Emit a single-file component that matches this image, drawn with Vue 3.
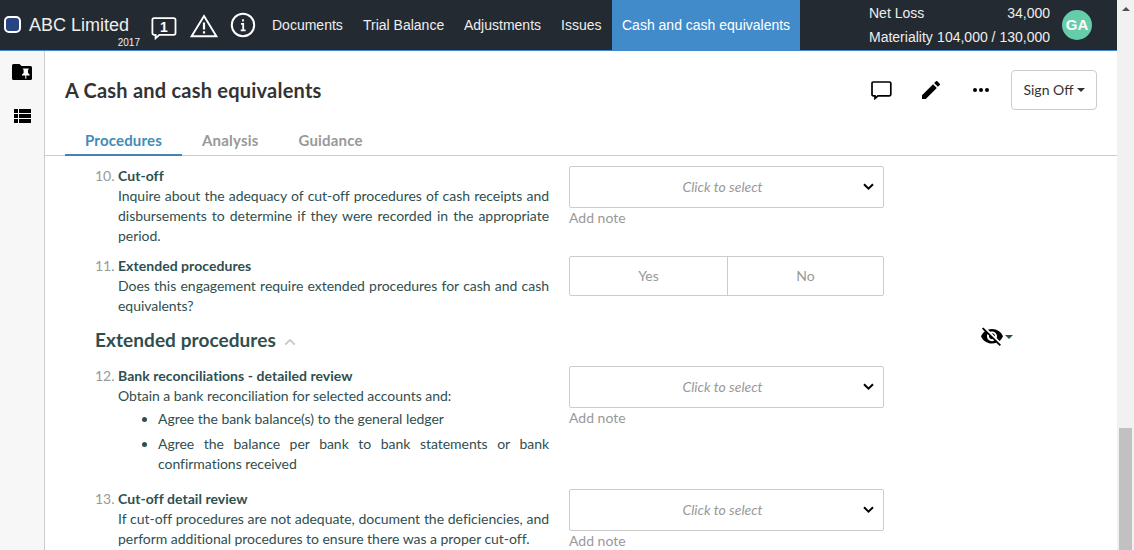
<script setup>
const nav = [
  { label: 'Documents', w: 71 },
  { label: 'Trial Balance', w: 81 },
  { label: 'Adjustments', w: 77 },
  { label: 'Issues', w: 41 },
]
const tabs = ['Procedures', 'Analysis', 'Guidance']
const before = [
  { n: '10.', title: 'Cut-off', text: 'Inquire about the adequacy of cut-off procedures of cash receipts and disbursements to determine if they were recorded in the appropriate period.', kind: 'select' },
  { n: '11.', title: 'Extended procedures', text: 'Does this engagement require extended procedures for cash and cash equivalents?', kind: 'choice' },
]
const after = [
  {
    n: '12.', title: 'Bank reconciliations - detailed review', text: 'Obtain a bank reconciliation for selected accounts and:', kind: 'select',
    bullets: ['Agree the bank balance(s) to the general ledger', 'Agree the balance per bank to bank statements or bank confirmations received'],
  },
  { n: '13.', title: 'Cut-off detail review', text: 'If cut-off procedures are not adequate, document the deficiencies, and perform additional procedures to ensure there was a proper cut-off.', kind: 'select' },
]
const groups = [{ items: before }, { heading: 'Extended procedures', items: after }]
</script>

<template>
  <div class="window">
    <div class="app">
      <header class="topbar">
        <span class="logo"></span>
        <div class="brand">
          <span class="company">ABC Limited</span>
          <span class="year">2017</span>
        </div>
        <div class="top-icons">
          <svg class="i-message" width="26" height="26" viewBox="0 0 26 26">
            <path d="M3 3.2H22.7Q24.5 3.2 24.5 4.9V18Q24.5 19.8 22.7 19.8H8.4L4.6 23.2V19.8H3.3Q1.4 19.8 1.4 18V4.9Q1.4 3.2 3 3.2Z" fill="none" stroke="#fff" stroke-width="1.8" />
            <text x="13" y="16.6" text-anchor="middle" class="badge">1</text>
          </svg>
          <svg width="30" height="26" viewBox="0 0 30 26">
            <path d="M15 4L27.4 24.2H2.6Z" fill="none" stroke="#fff" stroke-width="1.9" />
            <path d="M15 10.6V17.6M15 19.2V21.4" stroke="#fff" stroke-width="2.2" />
          </svg>
          <svg width="26" height="26" viewBox="0 0 26 26">
            <circle cx="13" cy="13" r="11.2" fill="none" stroke="#fff" stroke-width="2" />
            <path d="M13 7.2V9.4M11 11.9H13.2V18.2M10.7 18.3H15.6" fill="none" stroke="#fff" stroke-width="1.8" />
          </svg>
        </div>
        <nav class="nav">
          <a v-for="item in nav" :key="item.label" class="nav-item" :style="{ width: item.w + 'px' }">{{ item.label }}</a>
          <a class="nav-item current">Cash and cash equivalents</a>
        </nav>
        <div class="totals">
          <div class="total"><span>Net Loss</span><span>34,000</span></div>
          <div class="total"><span>Materiality</span><span>104,000 / 130,000</span></div>
        </div>
        <div class="avatar">GA</div>
      </header>

      <div class="body">
        <aside class="rail">
          <svg width="20" height="16" viewBox="0 0 20 16">
            <path d="M1.5 0H7.5L9.5 2H18.5Q20 2 20 3.5V14.5Q20 16 18.5 16H1.5Q0 16 0 14.5V1.5Q0 0 1.5 0Z" />
            <path d="M10.8 4.5H16.8V5.6H16V9L17.6 10.6V11.6H14.3V14.8H13.3V11.6H10V10.6L11.6 9V5.6H10.8Z" fill="#fff" />
          </svg>
          <svg width="17" height="14" viewBox="0 0 17 14" class="list-icon">
            <path d="M0 0H4V4H0ZM5 0H17V4H5ZM0 5H4V9H0ZM5 5H17V9H5ZM0 10H4V14H0ZM5 10H17V14H5Z" />
          </svg>
        </aside>

        <main class="main">
          <div class="doc-head">
            <h1>A Cash and cash equivalents</h1>
            <svg class="i-comment" width="21" height="19" viewBox="0 0 21 19">
              <path d="M2 1H18.5Q19.8 1 19.8 2.3V13.5Q19.8 14.8 18.5 14.8H7L4 17.5V14.8H2.3Q1 14.8 1 13.5V2.3Q1 1 2.3 1Z" fill="none" stroke="#000" stroke-width="1.7" />
            </svg>
            <svg class="i-pencil" width="18" height="18" viewBox="3 3 18 18">
              <path d="M3 17.25V21h3.75L17.81 9.94l-3.75-3.75L3 17.25zM20.71 7.04a1 1 0 0 0 0-1.41l-2.34-2.34a1 1 0 0 0-1.41 0l-1.83 1.83 3.75 3.75 1.83-1.83z" />
            </svg>
            <svg class="i-more" width="16" height="4" viewBox="0 0 16 4">
              <circle cx="2" cy="2" r="2" /><circle cx="8" cy="2" r="2" /><circle cx="14" cy="2" r="2" />
            </svg>
            <button class="sign">Sign Off<i class="caret"></i></button>
          </div>

          <div class="tabs">
            <span v-for="(tab, i) in tabs" :key="tab" class="tab" :class="{ active: i === 0 }">{{ tab }}</span>
          </div>

          <div class="list">
            <template v-for="(group, g) in groups" :key="g">
              <div v-if="group.heading" class="section">
                <h2>{{ group.heading }}</h2>
                <svg class="collapse" width="12" height="8" viewBox="0 0 12 8"><path d="M1.3 6.6L6 1.9L10.7 6.6" fill="none" stroke="#c4c4c4" stroke-width="1.7" /></svg>
                <svg class="i-hidden" width="22" height="19" viewBox="1 2.5 22 19.5" preserveAspectRatio="none">
                  <path d="M12 7c2.76 0 5 2.24 5 5 0 .65-.13 1.26-.36 1.83l2.92 2.92c1.51-1.26 2.7-2.89 3.43-4.75-1.73-4.39-6-7.5-11-7.5-1.4 0-2.74.25-3.98.7l2.16 2.16C10.74 7.13 11.35 7 12 7zM2 4.27l2.28 2.28.46.46C3.08 8.3 1.78 10.02 1 12c1.73 4.39 6 7.5 11 7.5 1.55 0 3.03-.3 4.38-.84l.42.42L19.73 22 21 20.73 3.27 3 2 4.27zM7.53 9.8l1.55 1.55c-.05.21-.08.43-.08.65 0 1.66 1.34 3 3 3 .22 0 .44-.03.65-.08l1.55 1.55c-.67.33-1.41.53-2.2.53-2.76 0-5-2.24-5-5 0-.79.2-1.53.53-2.2zm4.31-.78l3.15 3.15.02-.16c0-1.66-1.34-3-3-3l-.17.01z" />
                </svg>
                <i class="caret teal"></i>
              </div>
              <section v-for="p in group.items" :key="p.n" class="proc">
                <span class="num">{{ p.n }}</span>
                <div class="copy">
                  <h3>{{ p.title }}</h3>
                  <p>{{ p.text }}</p>
                  <ul v-if="p.bullets"><li v-for="b in p.bullets" :key="b">{{ b }}</li></ul>
                </div>
                <div class="answer">
                  <template v-if="p.kind === 'select'">
                    <div class="select">
                      <span>Click to select</span>
                      <svg width="11" height="8" viewBox="0 0 11 8"><path d="M1 1.2L5.5 5.7L10 1.2" fill="none" stroke="#000" stroke-width="2" /></svg>
                    </div>
                    <div class="note">Add note</div>
                  </template>
                  <div v-else class="choice"><span>Yes</span><span>No</span></div>
                </div>
              </section>
            </template>
          </div>
        </main>
      </div>
    </div>
    <div class="scrollbar"><i class="up"></i><div class="thumb"></div></div>
  </div>
</template>

<style>
html, body { overflow: hidden; }
</style>

<style scoped>
* { box-sizing: border-box; }
h1, h2, h3, p, ul { margin: 0; padding: 0; }
svg { display: block; flex: none; }
.window { display: flex; width: 1134px; height: 550px; overflow: hidden; background: #fff; font: 14px/20px Lato, sans-serif; color: #2f4f4f; }
.app { width: 1117px; display: flex; flex-direction: column; }
.topbar { flex: none; height: 51px; background: #242a31; border-bottom: 1px solid #428bca; display: flex; align-items: center; color: #eee; font-family: "Liberation Sans", Arial, sans-serif; white-space: nowrap; }
.logo { flex: none; width: 17px; height: 17px; margin: 0 0 1px 4px; border: 2px solid #fff; border-radius: 5px; background: #284582; }
.brand { width: 119px; height: 50px; margin-left: 8px; padding-top: 14px; display: flex; flex-direction: column; }
.company { font-size: 18px; line-height: 22px; }
.year { font-size: 10px; line-height: 14px; text-align: right; padding-right: 8px; }
.top-icons { display: flex; gap: 11.5px; align-items: center; margin-left: 3px; width: 118px; }
.i-message { margin-top: 5px; }
.badge { font: bold 14px "Liberation Sans", sans-serif; fill: #fff; }
.nav { display: flex; margin-left: 3px; height: 51px; align-self: flex-start; }
.nav-item { margin-right: 20px; font-size: 14px; line-height: 50px; }
.nav-item:nth-child(4) { margin-right: 10px; }
.current { width: 188px; margin: 0; padding-left: 10px; background: #428bca; color: #fff; }
.totals { margin-left: 69px; width: 181px; font-size: 14px; }
.total { display: flex; justify-content: space-between; line-height: 24px; }
.avatar { width: 30px; height: 30px; margin-left: 12px; border-radius: 50%; background: #66cdaa; color: #fff; font-weight: bold; font-size: 15px; line-height: 30px; text-align: center; }
.body { flex: 1; display: flex; min-height: 0; }
.rail { width: 45px; flex: none; background: #f7f7f7; border-right: 1px solid #ccc; padding: 13px 0 0 12px; }
.list-icon { margin: 29px 0 0 2px; }
.main { flex: 1; min-width: 0; }
.doc-head { height: 80px; padding: 0 20px 2px; display: flex; align-items: center; }
h1 { flex: 1; font-size: 20px; line-height: 24px; font-weight: 700; color: #333; letter-spacing: 0.22px; }
.i-comment { margin-right: 30px; }
.i-pencil { margin-right: 33px; }
.i-more { margin-right: 22px; }
.sign { width: 86px; height: 40px; border: 1px solid #ccc; border-radius: 4px; background: #fff; color: #333; font: 14px/20px Lato, sans-serif; display: flex; align-items: center; justify-content: center; padding: 0; white-space: nowrap; }
.caret { flex: none; border: 4px solid transparent; border-top-color: #333; border-bottom: 0; margin-left: 3px; }
.tabs { height: 25px; padding-left: 20px; border-bottom: 1px solid #ccc; display: flex; }
.tab { height: 25px; padding: 0 20px; line-height: 19px; font-size: 15px; font-weight: 700; color: #999; letter-spacing: 0.18px; }
.tab.active { color: #428bba; border-bottom: 2px solid #4682b4; }
.list { padding: 10px 0 0 50px; }
.proc { display: flex; margin-bottom: 10px; }
.num { width: 23px; flex: none; color: #999; }
.copy { width: 431px; text-align: justify; letter-spacing: -0.035px; font-variant-ligatures: common-ligatures; }
h3 { font-size: 14px; line-height: 20px; font-weight: 700; letter-spacing: 0.05px; }
ul { list-style: disc; padding-left: 40px; }
li { margin-top: 3px; margin-bottom: 5px; }
li + li { margin-top: 0; }
.answer { width: 315px; margin-left: 20px; color: #999; }
.select { height: 42px; border: 1px solid #ccc; border-radius: 2px; display: flex; align-items: center; padding-right: 9px; }
.select span { flex: 1; text-align: center; font-style: italic; padding-left: 12px; }
.note { line-height: 20px; }
.choice { height: 40px; border: 1px solid #ccc; border-radius: 2px; display: flex; line-height: 38px; text-align: center; }
.choice span { width: 157px; }
.choice span + span { flex: 1; border-left: 1px solid #ccc; }
.section { height: 50px; margin-top: -10px; display: flex; align-items: center; padding-bottom: 2px; }
h2 { font-size: 19px; line-height: 24px; font-weight: 700; letter-spacing: 0.07px; }
.collapse { margin: 4px 0 0 8px; }
.i-hidden { margin: -8px 0 0 auto; }
.caret.teal { border-top-color: #2f4f4f; margin: -6px 104px 0 2px; }
.scrollbar { width: 17px; background: #f1f1f1; display: flex; flex-direction: column; align-items: center; }
.up { border: 4px solid transparent; border-top: 0; border-bottom-color: #505050; margin-top: 7px; }
.thumb { width: 13px; height: 122px; margin-top: auto; background: #c1c1c1; }
</style>
